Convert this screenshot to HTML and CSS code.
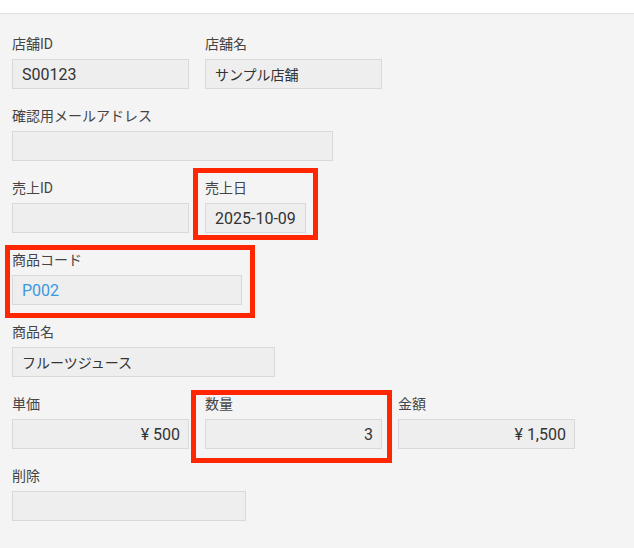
FILE: index.html
```html
<!DOCTYPE html>
<html lang="ja">
<head>
<meta charset="utf-8">
<title>売上入力</title>
<link rel="stylesheet" href="styles.css">
</head>
<body>
<header class="topbar"></header>
<main class="form">
  <div class="row">
    <div class="field">
      <div class="label">店舗ID</div>
      <div class="box w177">S00123</div>
    </div>
    <div class="field">
      <div class="label">店舗名</div>
      <div class="box w177 ja">サンプル店舗</div>
    </div>
  </div>
  <div class="row">
    <div class="field">
      <div class="label">確認用メールアドレス</div>
      <div class="box w321"></div>
    </div>
  </div>
  <div class="row">
    <div class="field">
      <div class="label">売上ID</div>
      <div class="box w177"></div>
    </div>
    <div class="field">
      <div class="label">売上日</div>
      <div class="box w101">2025-10-09</div>
      <div class="mark mark-date"></div>
    </div>
  </div>
  <div class="row">
    <div class="field">
      <div class="label">商品コード</div>
      <div class="box w230 link">P002</div>
      <div class="mark mark-code"></div>
    </div>
  </div>
  <div class="row">
    <div class="field">
      <div class="label">商品名</div>
      <div class="box w263 ja">フルーツジュース</div>
    </div>
  </div>
  <div class="row">
    <div class="field">
      <div class="label">単価</div>
      <div class="box w177 right">¥ 500</div>
    </div>
    <div class="field">
      <div class="label">数量</div>
      <div class="box w177 right">3</div>
      <div class="mark mark-qty"></div>
    </div>
    <div class="field">
      <div class="label">金額</div>
      <div class="box w177 right">¥ 1,500</div>
    </div>
  </div>
  <div class="row">
    <div class="field">
      <div class="label">削除</div>
      <div class="box w234"></div>
    </div>
  </div>
</main>
</body>
</html>
```

FILE: styles.css
```css
* { box-sizing: border-box; }

html, body {
  margin: 0;
  padding: 0;
}

body {
  background: #f4f4f4;
  min-height: 100vh;
  font-family: Roboto, "Noto Sans CJK JP", sans-serif;
  color: #333;
}

.topbar {
  height: 14px;
  background: #ffffff;
  border-bottom: 1px solid #e0e0e0;
}

.form {
  padding: 20px 12px 20px 12px;
  display: flex;
  flex-direction: column;
  gap: 17px;
}

.row {
  display: flex;
  gap: 16px;
  align-items: flex-start;
}

.field {
  position: relative;
  display: flex;
  flex-direction: column;
  gap: 5px;
}

.label {
  font-size: 14px;
  line-height: 20px;
  height: 20px;
  color: #444;
}

.box {
  height: 30px;
  background: #eeeeee;
  border: 1px solid #d9d9d9;
  padding: 0 9px;
  display: flex;
  align-items: center;
  font-size: 16px;
  color: #333;
  white-space: nowrap;
}

.box.ja { font-size: 14px; }
.box.link { color: #3a98e0; }
.box.right { justify-content: flex-end; padding-right: 8px; }

.w101 { width: 101px; }
.w177 { width: 177px; }
.w230 { width: 230px; }
.w234 { width: 234px; }
.w263 { width: 263px; }
.w321 { width: 321px; }

.mark {
  position: absolute;
  border: 5px solid #ff2600;
  pointer-events: none;
}

.mark-date { left: -12px; top: -10px; width: 125px; height: 72px; }
.mark-code { left: -7px; top: -5px; width: 250px; height: 73px; }
.mark-qty { left: -14px; top: -4px; width: 201px; height: 73px; }
```
